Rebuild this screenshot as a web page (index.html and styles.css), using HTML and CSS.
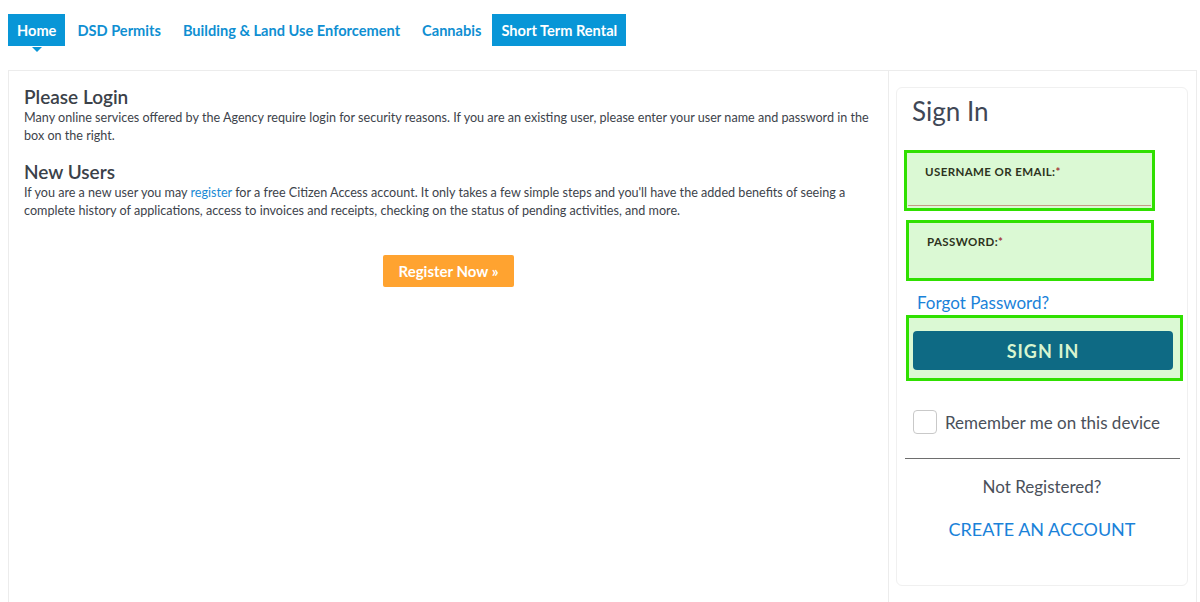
FILE: index.html
```html
<!DOCTYPE html>
<html lang="en">
<head>
    <meta charset="UTF-8">
    <meta name="viewport" content="width=device-width, initial-scale=1.0">
    <title>Citizen Access - Login</title>
    <link rel="stylesheet" href="styles.css">
</head>
<body>
    <nav class="tabs">
        <a class="tab tab-active" href="#">Home</a>
        <a class="tab" href="#">DSD Permits</a>
        <a class="tab" href="#">Building &amp; Land Use Enforcement</a>
        <a class="tab" href="#">Cannabis</a>
        <a class="tab tab-filled" href="#">Short Term Rental</a>
    </nav>

    <div class="main">
        <div class="info">
            <h3>Please Login</h3>
            <p>Many online services offered by the Agency require login for security reasons. If you are an existing user, please enter your user name and password in the box on the right.</p>

            <h3 class="second">New Users</h3>
            <p>If you are a new user you may <a href="#">register</a> for a free Citizen Access account. It only takes a few simple steps and you'll have the added benefits of seeing a complete history of applications, access to invoices and receipts, checking on the status of pending activities, and more.</p>

            <div class="register-row">
                <button class="btn-register">Register Now &raquo;</button>
            </div>
        </div>

        <div class="side">
            <div class="login-card">
                <h2>Sign In</h2>

                <div class="field field-user">
                    <label>USERNAME OR EMAIL:<span class="req">*</span></label>
                    <div class="line"></div>
                </div>

                <div class="field field-pass">
                    <label>PASSWORD:<span class="req">*</span></label>
                </div>

                <a class="forgot" href="#">Forgot Password?</a>

                <div class="signin-wrap">
                    <button class="btn-signin">SIGN IN</button>
                </div>

                <label class="remember">
                    <span class="box"></span>
                    Remember me on this device
                </label>

                <hr>

                <p class="not-reg">Not Registered?</p>
                <a class="create" href="#">CREATE AN ACCOUNT</a>
            </div>
        </div>
    </div>
</body>
</html>
```

FILE: styles.css
```css
* {
    margin: 0;
    padding: 0;
    box-sizing: border-box;
}

body {
    font-family: Lato, "Open Sans", Arial, sans-serif;
    background: #fff;
    color: #3d434b;
    padding: 14px 3px 0 8px;
}

a {
    text-decoration: none;
}

/* top navigation */
.tabs {
    display: flex;
    height: 32px;
}

.tab {
    display: flex;
    align-items: center;
    padding: 0 11px;
    font-size: 14.6px;
    font-weight: 700;
    color: #0f8fd2;
    position: relative;
}

.tab-active,
.tab-filled {
    background: #0896d7;
    color: #fff;
    padding: 0 9px;
}

.tab-active {
    margin-right: 1px;
}

.tab-active::after {
    content: "";
    position: absolute;
    left: 50%;
    bottom: -6px;
    margin-left: -5px;
    border-left: 5px solid transparent;
    border-right: 5px solid transparent;
    border-top: 5px solid #0896d7;
}

.tab-filled {
    margin-left: 0;
}

/* main box */
.main {
    margin-top: 24px;
    border: 1px solid #ececec;
    border-bottom: none;
    display: grid;
    grid-template-columns: 880px 1fr;
    height: 540px;
}

.info {
    border-right: 1px solid #ececec;
    padding: 14px 15px;
}

.info h3 {
    font-size: 19px;
    font-weight: 600;
    color: #3b4149;
    line-height: 24px;
}

.info h3.second {
    margin-top: 15px;
}

.info p {
    font-size: 12.6px;
    line-height: 18px;
    color: #3d434b;
}

.info p a {
    color: #1a8ad4;
}

.register-row {
    display: flex;
    justify-content: center;
    margin-top: 35px;
}

.btn-register {
    background: #ffa330;
    color: #fff;
    border: none;
    border-radius: 2px;
    font-family: inherit;
    font-size: 15px;
    font-weight: 700;
    width: 131px;
    height: 32px;
}

/* sign in panel */
.side {
    padding: 16px 8px 0 7px;
}

.login-card {
    border: 1px solid #f0f0f0;
    border-radius: 6px;
    height: 499px;
    padding: 8px 0 0 8px;
    display: flex;
    flex-direction: column;
    align-items: flex-start;
}

.login-card h2 {
    font-size: 26px;
    font-weight: 400;
    color: #3f4756;
    margin-left: 7px;
    line-height: 30px;
}

.field {
    width: 251px;
    height: 61px;
    border: 3px solid #2fe000;
    background: #dbf9d4;
    padding: 7px 0 0 18px;
    position: relative;
}

.field-user {
    margin-top: 24px;
    margin-left: -1px;
}

.field-pass {
    margin-top: 9px;
    margin-left: 1px;
    width: 248px;
    padding-top: 7px;
}

.field label {
    font-size: 11.5px;
    font-weight: 700;
    color: #2d3320;
    letter-spacing: 0.4px;
}

.req {
    color: #a53a3a;
}

.field .line {
    position: absolute;
    left: 1px;
    right: 1px;
    bottom: 2px;
    height: 1px;
    background: #c79a86;
}

.forgot {
    margin-top: 13px;
    margin-left: 12px;
    font-size: 17px;
    color: #1a82d9;
    line-height: 18px;
}

.signin-wrap {
    margin-top: 3px;
    margin-left: 1px;
    width: 277px;
    height: 66px;
    border: 3px solid #2fe000;
    background: #dbf9d4;
    padding: 13px 7px 0 4px;
}

.btn-signin {
    width: 100%;
    height: 39px;
    background: #0e6a84;
    color: #d8f5cf;
    border: none;
    border-radius: 4px;
    font-family: inherit;
    font-size: 18px;
    font-weight: 700;
    letter-spacing: 1px;
}

.remember {
    display: flex;
    align-items: center;
    gap: 8px;
    margin-top: 29px;
    margin-left: 8px;
    font-size: 17px;
    color: #4a505a;
}

.box {
    width: 24px;
    height: 24px;
    border: 1px solid #c9c9c9;
    border-radius: 4px;
    background: #fff;
}

.login-card hr {
    align-self: stretch;
    margin: 24px 7px 0 0;
    border: none;
    border-top: 1px solid #6e6e6e;
}

.not-reg,
.create {
    align-self: stretch;
    text-align: center;
    margin-left: -8px;
}

.not-reg {
    margin-top: 17px;
    font-size: 17px;
    color: #4a505a;
}

.create {
    margin-top: 21px;
    font-size: 18px;
    color: #1a82d9;
}
```
